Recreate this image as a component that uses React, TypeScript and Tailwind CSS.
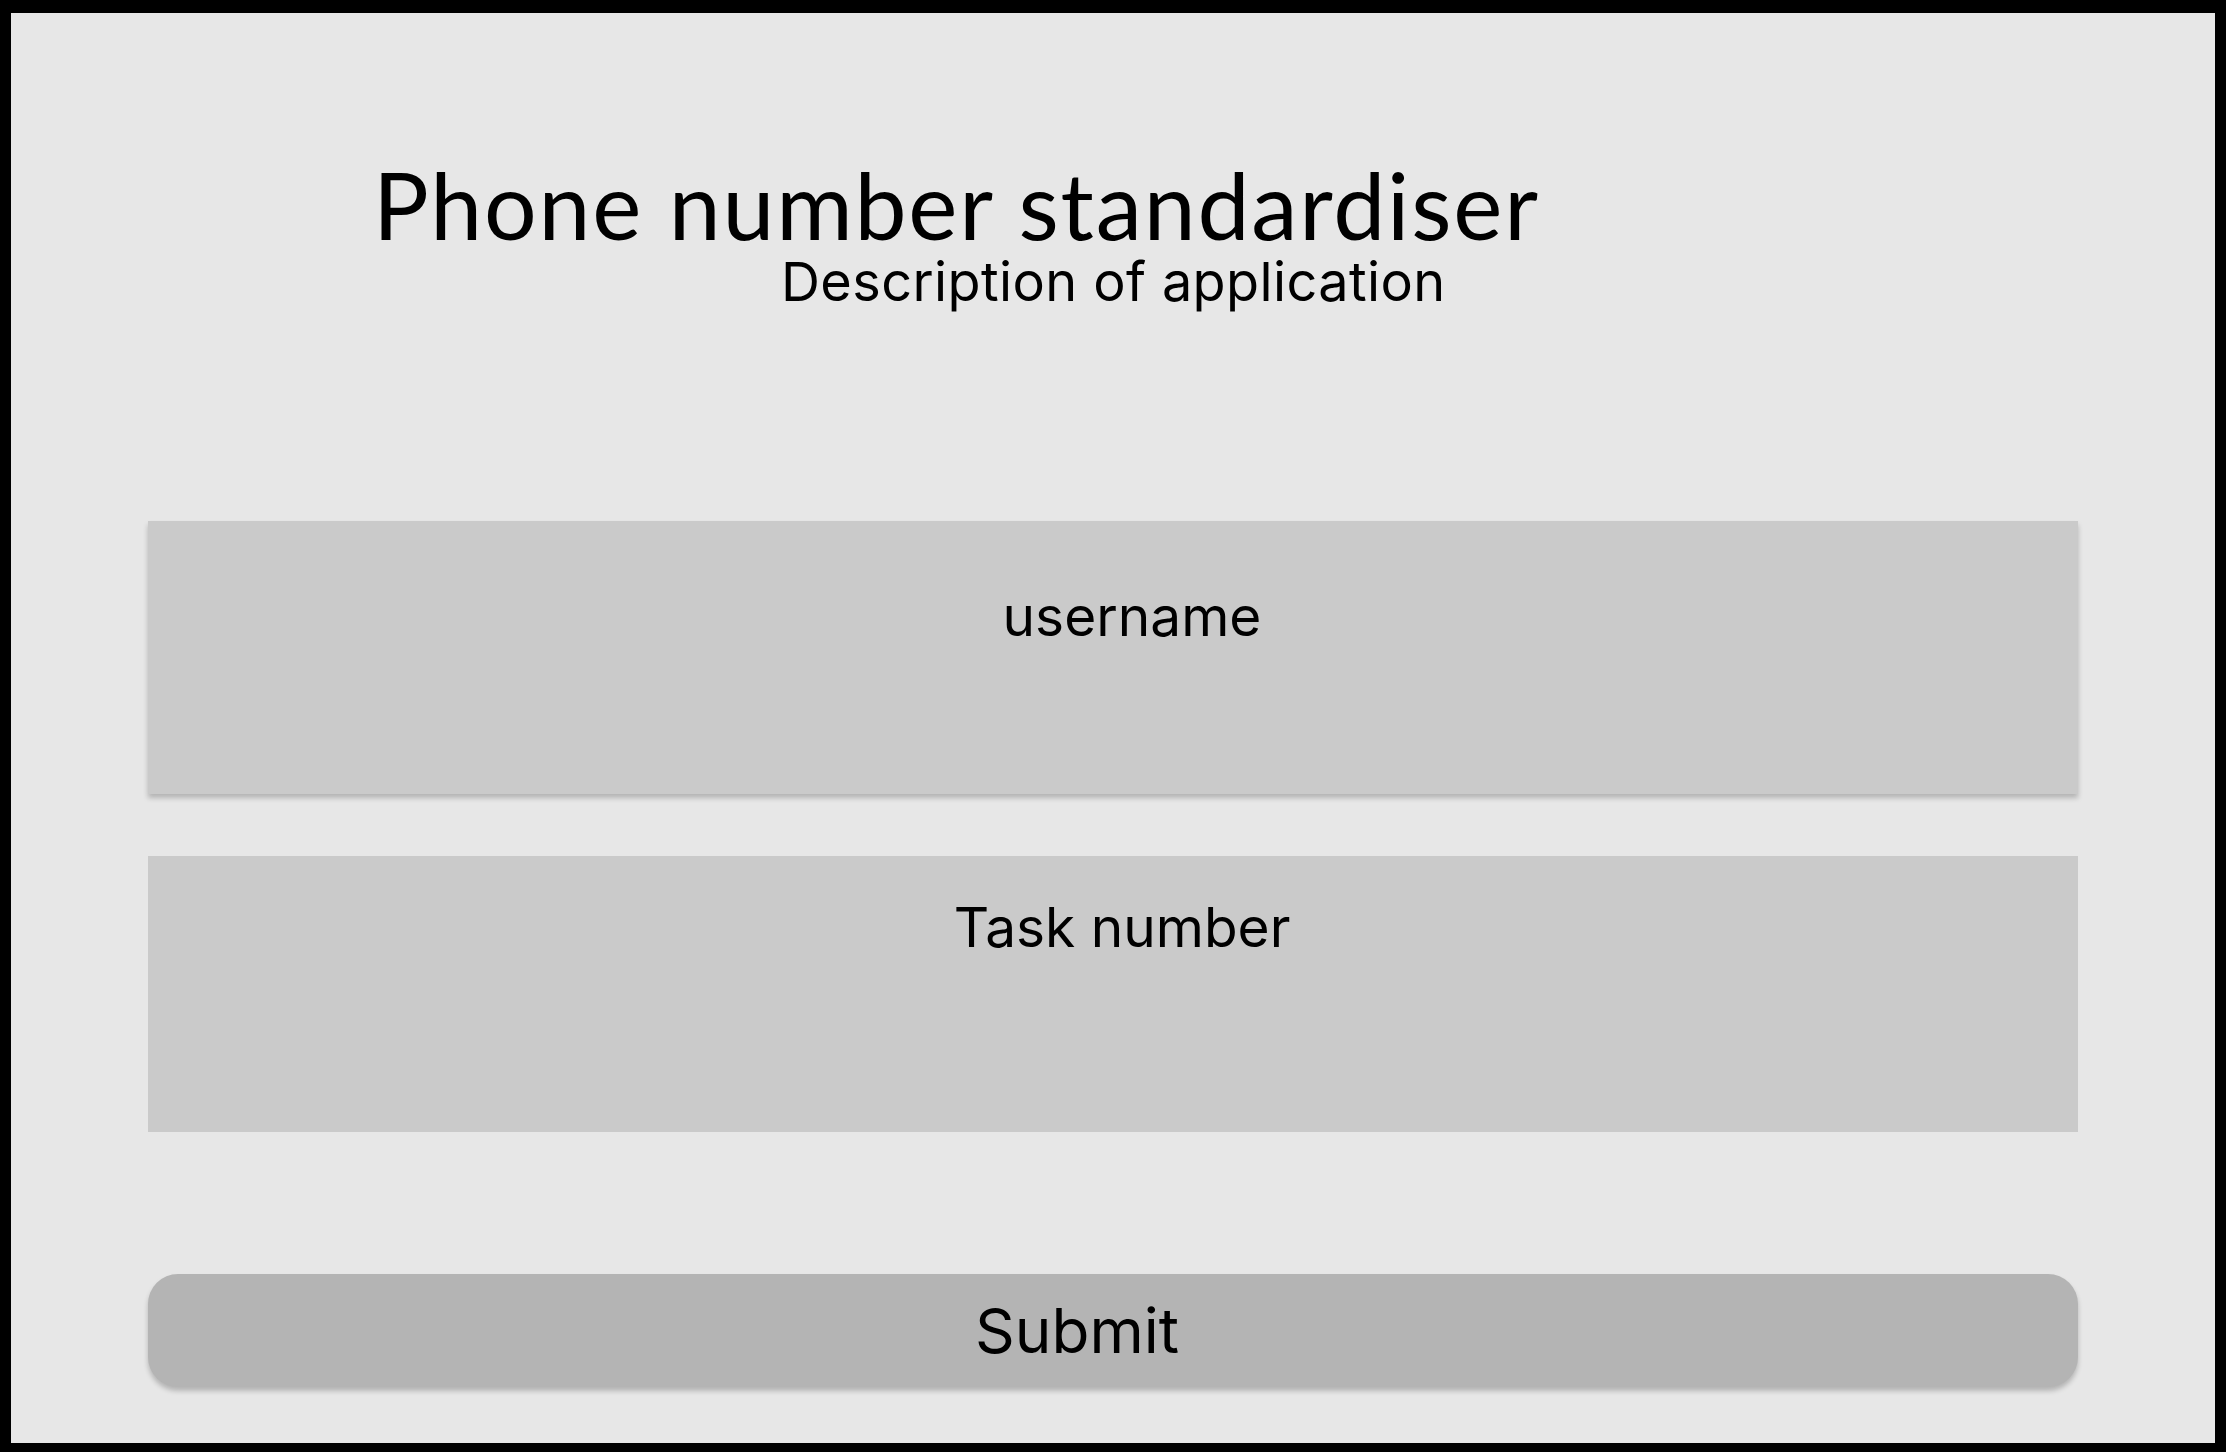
import React from "react"

const inter = { fontFamily: "Inter, 'Liberation Sans', sans-serif" }

function Field({ label, className = "", textClass = "" }: { label: string; className?: string; textClass?: string }) {
  return <div className={`w-full bg-[#cacaca] ${className}`}>
    <div className={`text-center text-[55px] leading-none text-black ${textClass}`}>{label}</div>
  </div>
}

export default function App() {
  return <div className="w-full h-screen bg-[#e7e7e7] border-black border-[11px] border-t-[13px] border-b-[9px] flex flex-col font-['Inter',sans-serif]" style={inter}>
    <h1 className="pt-[145px] pl-[362px] text-[93px] leading-none tracking-[1.8px] text-black font-normal font-['Lato',sans-serif]">
      Phone number standardiser
    </h1>
    <p className="pl-[770px] mt-[4px] text-[54px] leading-none tracking-[0.4px] text-black">Description of application</p>

    <div className="px-[137px] mt-[212px] flex flex-col">
      <Field label="username" className="h-[273px] pt-[68px] shadow-[0_4px_5px_rgba(0,0,0,0.22)]" textClass="pl-[38px]" />
      <Field label="Task number" className="h-[276px] pt-[44px] mt-[62px]" textClass="pl-[18px]" />
      <button className="mt-[142px] h-[113px] w-full rounded-[30px] bg-[#b4b4b4] flex items-center justify-center pr-[72px] text-[62px] leading-none text-black shadow-[0_4px_5px_rgba(0,0,0,0.22)]">
        Submit
      </button>
    </div>
  </div>
}
